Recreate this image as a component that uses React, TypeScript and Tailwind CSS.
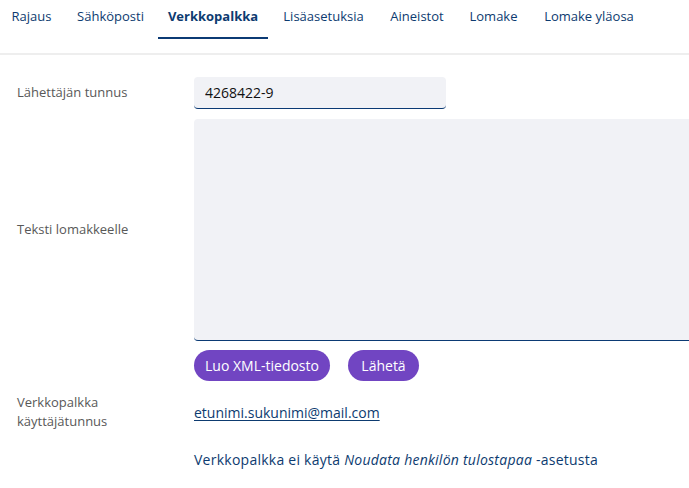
import { useState } from 'react'

const tabs = [
  { label: 'Rajaus', width: 'w-[63px]' },
  { label: 'Sähköposti', width: 'w-[89px]' },
  { label: 'Verkkopalkka', width: 'w-[110px]' },
  { label: 'Lisäasetuksia', width: 'w-[105px]' },
  { label: 'Aineistot', width: 'w-[76px]' },
  { label: 'Lomake', width: 'w-[71px]' },
  { label: 'Lomake yläosa', width: 'w-[114px]' },
]

export default function App() {
  const [active, setActive] = useState('Verkkopalkka')
  const [senderId, setSenderId] = useState('4268422-9')
  const [formText, setFormText] = useState('')

  return (
    <div className="w-[689px] h-[488px] overflow-hidden bg-white font-['Open_Sans',sans-serif]">
      {/* Tab bar */}
      <div className="h-[55px] border-b-2 border-[#eeeeee]">
        <nav className="flex gap-[3px] h-[39px]">
          {tabs.map(t => (
            <button
              key={t.label}
              onClick={() => setActive(t.label)}
              className={`${t.width} shrink-0 h-full pb-[3px] flex items-center justify-center text-[13px] text-[#0d3b70] border-b-2 ${
                active === t.label ? 'font-bold border-[#0b3a74]' : 'border-transparent'
              }`}
            >
              {t.label}
            </button>
          ))}
        </nav>
      </div>

      {/* Form */}
      <div className="pl-[17px] pt-[22px]">
        <div className="flex items-center">
          <label className="w-[177px] shrink-0 text-[13px] text-[#585858]">Lähettäjän tunnus</label>
          <input
            value={senderId}
            onChange={e => setSenderId(e.target.value)}
            className="w-[252px] h-[32px] px-[11px] rounded-[4px] bg-[#f1f2f6] border-b-[1.5px] border-[#0b3a74] text-[14px] text-[#111] outline-none"
          />
        </div>

        <div className="flex items-center mt-[10px]">
          <label className="w-[177px] shrink-0 text-[13px] text-[#585858]">Teksti lomakkeelle</label>
          <textarea
            value={formText}
            onChange={e => setFormText(e.target.value)}
            className="w-[520px] shrink-0 h-[222px] rounded-[4px] bg-[#f1f2f6] border-b-[1.5px] border-[#0b3a74] resize-none outline-none p-2 text-[14px]"
          />
        </div>

        <div className="flex gap-[18px] ml-[177px] mt-[9px]">
          <button className="h-[31px] w-[136px] rounded-full bg-[#7145c2] text-white text-[14px]">
            Luo XML-tiedosto
          </button>
          <button className="h-[31px] w-[71px] rounded-full bg-[#7145c2] text-white text-[14px]">
            Lähetä
          </button>
        </div>

        <div className="flex items-center mt-[12px]">
          <label className="w-[177px] shrink-0 text-[13px] leading-[19px] text-[#585858]">
            Verkkopalkka
            <br />
            käyttäjätunnus
          </label>
          <a href="#" className="text-[14px] text-[#0d3b70] underline underline-offset-2">
            etunimi.sukunimi@mail.com
          </a>
        </div>

        <p className="ml-[177px] mt-[18px] text-[14px] tracking-[0.25px] text-[#0d3b70]">
          Verkkopalkka ei käytä <em>Noudata henkilön tulostapaa</em> -asetusta
        </p>
      </div>
    </div>
  )
}
